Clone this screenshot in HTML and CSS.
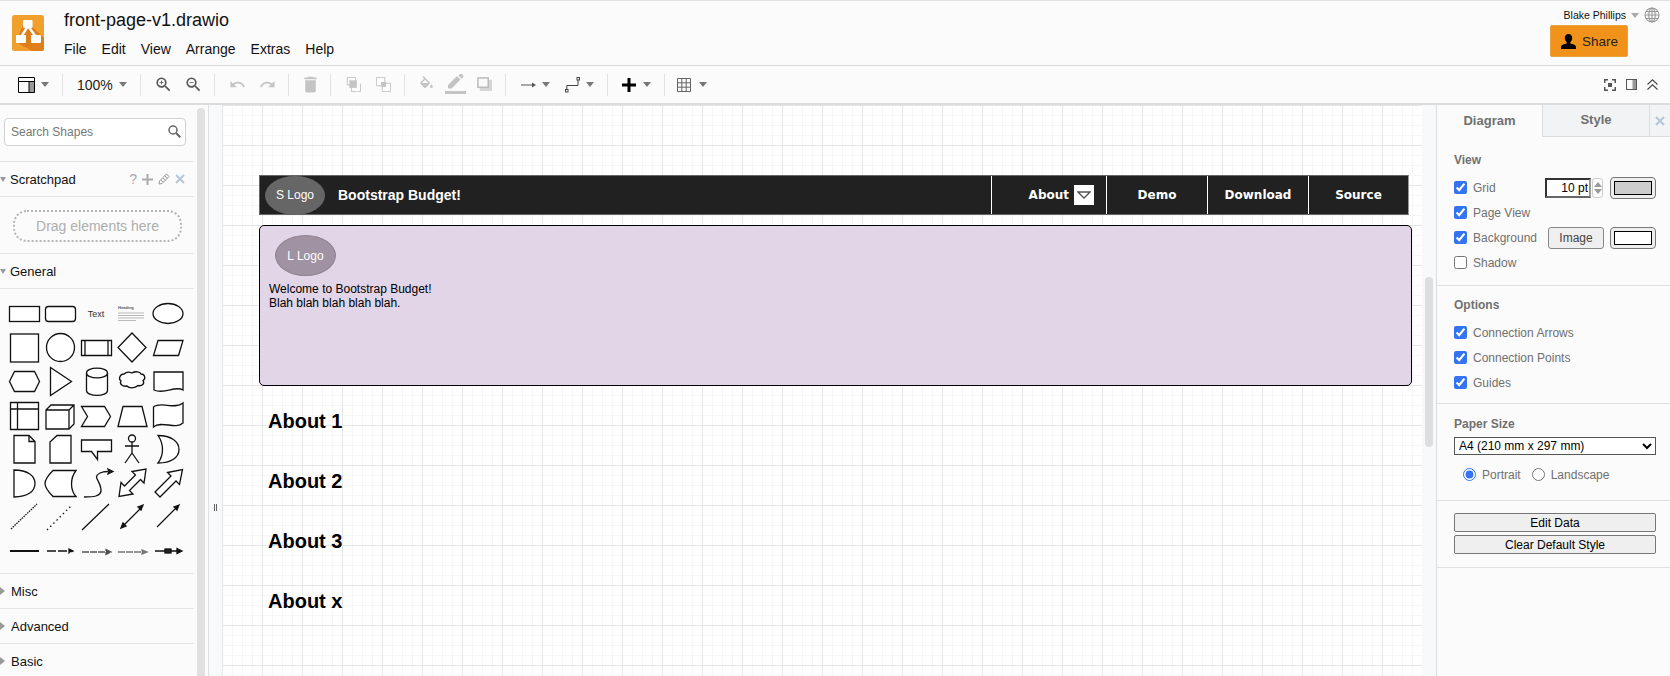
FILE: index.html
```html
<!doctype html>
<html lang="en">
<head>
    <meta charset="UTF-8">
    <title>front-page-v1.drawio</title>
    <link rel="stylesheet" href="styles.css">
</head>
<body>
<div class="app">
    <header class="header">
        <svg class="logo" viewBox="0 0 32 36" width="32" height="36">
            <rect width="32" height="36" rx="2.5" fill="#f2a02d"/>
            <path d="M13 5 L32 23 V33.5 A2.5 2.5 0 0 1 29.5 36 H20 L4 27 Z" fill="#df7f1c"/>
            <path d="M16 11 L9 22 M16 11 L24 22" stroke="#fff" stroke-width="2.4"/>
            <rect x="11" y="5" width="9.500" height="8" rx="1" fill="#fff"/>
            <rect x="4" y="20" width="10" height="8" rx="1" fill="#fff"/>
            <rect x="19" y="20" width="10" height="8" rx="1" fill="#fff"/>
        </svg>
        <div class="title-block">
            <div class="file-name">front-page-v1.drawio</div>
            <nav class="menu">
                <span>File</span><span>Edit</span><span>View</span><span>Arrange</span><span>Extras</span><span>Help</span>
            </nav>
        </div>
        <div class="user-block">
            <div class="user-row">
                <span>Blake Phillips</span>
                <i class="caret caret-light"></i>
                <svg width="16" height="16" viewBox="0 0 16 16" fill="none" stroke="#999" stroke-width="1.1">
                    <circle cx="8" cy="8" r="7"/>
                    <ellipse cx="8" cy="8" rx="3.2" ry="7"/>
                    <path d="M8 1v14M1 8h14M2 4.5h12M2 11.5h12"/>
                </svg>
            </div>
            <button class="share-btn">
                <svg width="17" height="17" viewBox="0 0 16 16"><path d="M8 1c2.200 0 3.500 1.700 3.500 3.800 0 1.700-.8 3.100-1.800 3.800v1.300c2.500.5 5.300 1.400 5.300 3.100V15H1v-2c0-1.700 2.800-2.600 5.300-3.100V8.600C5.300 7.900 4.500 6.500 4.500 4.800 4.500 2.700 5.800 1 8 1z"/></svg>
                Share
            </button>
        </div>
    </header>

    <div class="toolbar">
        <div class="tb-btn tb-layout">
            <svg width="17" height="16" viewBox="0 0 17 16"><rect x="11" y="4" width="5.500" height="11.500" fill="#999"/><path d="M.5.5h16v15H.5zM.5 4.500h16M11 4.500v11" fill="none" stroke="#000"/></svg>
            <i class="caret"></i>
        </div>
        <i class="tb-sep"></i>
        <div class="tb-btn tb-zoom"><span>100%</span><i class="caret"></i></div>
        <i class="tb-sep"></i>
        <div class="tb-btn"><svg class="ico dark" viewBox="0 0 24 24"><path d="M15.500 14h-.79l-.28-.27A6.470 6.470 0 0 0 16 9.500 6.500 6.500 0 1 0 9.500 16c1.610 0 3.090-.59 4.230-1.570l.27.28v.79l5 4.990L20.490 19l-4.990-5zm-6 0C7.010 14 5 11.990 5 9.500S7.010 5 9.500 5 14 7.010 14 9.500 11.990 14 9.500 14z"/><path d="M12 10h-2v2H9v-2H7V9h2V7h1v2h2z"/></svg></div>
        <div class="tb-btn"><svg class="ico dark" viewBox="0 0 24 24"><path d="M15.500 14h-.79l-.28-.27A6.470 6.470 0 0 0 16 9.500 6.500 6.500 0 1 0 9.500 16c1.610 0 3.090-.59 4.230-1.570l.27.28v.79l5 4.990L20.490 19l-4.990-5zm-6 0C7.010 14 5 11.990 5 9.500S7.010 5 9.500 5 14 7.010 14 9.500 11.990 14 9.500 14z"/><path d="M7 9h5v1H7z"/></svg></div>
        <i class="tb-sep"></i>
        <div class="tb-btn"><svg class="ico" viewBox="0 0 24 24"><path d="M12.500 8c-2.650 0-5.050.99-6.900 2.600L2 7v9h9l-3.620-3.620c1.390-1.160 3.160-1.880 5.120-1.880 3.540 0 6.550 2.310 7.600 5.500l2.370-.78C21.080 11.030 17.150 8 12.500 8z"/></svg></div>
        <div class="tb-btn"><svg class="ico" viewBox="0 0 24 24"><path d="M18.400 10.600C16.550 8.990 14.150 8 11.500 8c-4.650 0-8.580 3.030-9.960 7.220L3.900 16c1.050-3.190 4.050-5.500 7.600-5.500 1.950 0 3.730.72 5.120 1.880L13 16h9V7l-3.600 3.600z"/></svg></div>
        <i class="tb-sep"></i>
        <div class="tb-btn tb-narrow"><svg class="ico ico-trash" viewBox="0 0 24 24"><path d="M6 19c0 1.100.9 2 2 2h8c1.100 0 2-.9 2-2V7H6v12zM19 4h-3.500l-1-1h-5l-1 1H5v2h14V4z"/></svg></div>
        <i class="tb-sep"></i>
        <div class="tb-btn"><svg class="ico ico-order" viewBox="0 0 18 18"><path d="M1.500.5h10v4.500M1.500.5v9h5M12.500 17.500h-6v-5M17.500 8v9.500h-4" fill="none" stroke="#bbb"/><rect x="4" y="4" width="9" height="9" fill="#c4c4c4"/></svg></div>
        <div class="tb-btn"><svg class="ico ico-order" viewBox="0 0 18 18"><path d="M.5.5h10v10H.5zM7.500 7.500h10v10h-10z" fill="#fff" stroke="#bbb"/><rect x="6" y="6" width="6" height="6" fill="#c4c4c4"/></svg></div>
        <i class="tb-sep"></i>
        <div class="tb-btn tb-style"><svg class="ico" viewBox="0 0 24 24"><path d="M16.560 8.940L7.620 0 6.210 1.410l2.380 2.380-5.150 5.150c-.59.59-.59 1.540 0 2.120l5.500 5.500c.29.290.68.44 1.060.44s.77-.15 1.060-.44l5.500-5.500c.59-.58.59-1.530 0-2.120zM5.210 10L10 5.210 14.790 10H5.210zM19 11.500s-2 2.170-2 3.500c0 1.100.9 2 2 2s2-.9 2-2c0-1.330-2-3.500-2-3.500z"/></svg></div>
        <div class="tb-btn tb-style"><svg class="ico ico-line" viewBox="0 0 21 21"><path d="M15.500 5.500L12 2 3 11v3.500h3.500zM18.200 2.800c.4-.4.4-1 0-1.400L16.600-.2c-.4-.4-1-.4-1.400 0L13.500 1.500l3.500 3.500z"/><rect y="17" width="21" height="3"/></svg></div>
        <div class="tb-btn tb-style"><svg class="ico ico-order" viewBox="0 0 16 16"><rect x="3" y="3" width="13" height="12" fill="#d6d6d6"/><rect x="1" y="1" width="11" height="10" fill="#fafafa" stroke="#bbb" stroke-width="1.600"/></svg></div>
        <i class="tb-sep"></i>
        <div class="tb-btn tb-wide">
            <svg width="15" height="8" viewBox="0 0 15 8"><path d="M0 4h12" stroke="#555"/><path d="M11 1.500L15 4l-4 2.500z" fill="#555"/></svg>
            <i class="caret"></i>
        </div>
        <div class="tb-btn tb-wide">
            <svg width="15" height="16" viewBox="0 0 15 16" fill="none" stroke="#444"><rect x=".5" y="12.500" width="2.500" height="2.500"/><rect x="12" y=".5" width="2.500" height="2.500"/><path d="M1.800 12.500V8.500H13V3"/></svg>
            <i class="caret"></i>
        </div>
        <i class="tb-sep"></i>
        <div class="tb-btn tb-plus">
            <svg width="14" height="14" viewBox="0 0 14 14"><path d="M5.500 0h3v5.500H14v3H8.500V14h-3V8.500H0v-3h5.500z"/></svg>
            <i class="caret"></i>
        </div>
        <i class="tb-sep"></i>
        <div class="tb-btn tb-table">
            <svg width="14" height="14" viewBox="0 0 14 14" fill="none" stroke="#666"><path d="M.5.500h13v13H.5zM4.800.5v13M9.200.5v13M.5 4.800h13M.5 9.200h13"/></svg>
            <i class="caret"></i>
        </div>
        <div class="tb-right">
            <svg width="12" height="12" viewBox="0 0 12 12" fill="#555"><path d="M0 0h4v1.500H1.500V4H0zM8 0h4v4h-1.500V1.500H8zM0 8h1.500v2.500H4V12H0zM10.500 8H12v4H8v-1.500h2.500z"/><rect x="4" y="4" width="4" height="4"/></svg>
            <svg width="11" height="11" viewBox="0 0 11 11"><rect x="6.500" y="1" width="4" height="9" fill="#999"/><rect x=".5" y=".5" width="10" height="10" fill="none" stroke="#555"/></svg>
            <svg width="11" height="11" viewBox="0 0 11 11" fill="none" stroke="#444" stroke-width="1.100"><path d="M.5 5.500L5.500.8l5 4.700M.5 10.500l5-4.700 5 4.700"/></svg>
        </div>
    </div>

    <div class="workspace">
        <aside class="sidebar">
            <div class="shapes">
                <div class="search-wrap">
                    <input class="search" type="text" placeholder="Search Shapes">
                    <svg class="search-ico" width="13" height="13" viewBox="0 0 13 13" fill="none" stroke="#666" stroke-width="1.500"><circle cx="5" cy="5" r="4"/><path d="M8 8l4.300 4.300" stroke-width="2"/></svg>
                </div>
                <div class="sec-head">
                    <i class="tri-down"></i><span>Scratchpad</span>
                    <div class="sec-tools">
                        <span class="tool-q">?</span>
                        <svg width="11" height="11" viewBox="0 0 11 11"><path d="M4.500 0h2v4.500H11v2H6.500V11h-2V6.500H0v-2h4.500z" fill="#aaa"/></svg>
                        <svg width="12" height="12" viewBox="0 0 12 12" fill="none" stroke="#999"><path d="M1 11l.6-3L8.500 1l2.500 2.500-7 7zM3 7l2.500 2.500M5 5l2.500 2.500M7 3l2.500 2.500"/></svg>
                        <svg width="10" height="10" viewBox="0 0 10 10" stroke="#b4c6da" stroke-width="2"><path d="M1 1l8 8M9 1L1 9"/></svg>
                    </div>
                </div>
                <div class="scratch-body"><div class="drop-box">Drag elements here</div></div>
                <div class="sec-head"><i class="tri-down"></i><span>General</span></div>
                <div class="palette">
                    <svg width="194" height="285" viewBox="0 0 194 285" fill="#fff" stroke="#111" stroke-width="1.300">
                        <g transform="translate(0,-289)">
                            <rect x="9.500" y="306.500" width="30" height="15"/>
                            <rect x="45.500" y="306.500" width="30" height="15" rx="3"/>
                            <text x="96" y="317" class="pal-text">Text</text>
                            <text x="118" y="309" class="pal-head">Heading</text>
                            <path d="M118 313h26M118 315.500h26M118 318h26M118 320.500h18" stroke="#aaa" stroke-width=".8"/>
                            <ellipse cx="168" cy="313.500" rx="15" ry="10"/>

                            <rect x="10.500" y="334" width="28" height="28"/>
                            <circle cx="60.500" cy="347.500" r="14"/>
                            <path d="M81.500 340.500h30v15h-30zM85 340.500v15M108 340.500v15"/>
                            <path d="M132 333l14 14.500-14 14.500-14-14.500z"/>
                            <path d="M158 340.500h25l-4.500 15h-25z"/>

                            <path d="M14.500 371.500h20l5 10-5 10h-20l-5-10z"/>
                            <path d="M50.500 367.500l21 14-21 14z"/>
                            <path d="M86.500 373c0-6.500 21-6.500 21 0v17.500c0 6.500-21 6.500-21 0zM86.500 373c0 6.500 21 6.500 21 0"/>
                            <path d="M124 374c3-3 6-2 8-1 3-2 8-1.500 9 1 4 0 5 5 2 6.500 2 3-1 6-5 5-3 3-9 3-11 .5-4 1-8-2-6-5-3-2-1-7 3-7z"/>
                            <path d="M154 372h29v18c-8-5-18 5-29 0z"/>

                            <path d="M10.500 402.500h28v27h-28zM10.500 409h28M17.500 402.500v27"/>
                            <path d="M46 410l5-5h23v19l-5 5H46zM46 410h23v19M69 410l5-5" />
                            <path d="M81.500 406.500h23l6 10-6 10h-23l6-10z"/>
                            <path d="M123 406.500h19l5 20h-29z"/>
                            <path d="M153.500 407c8-6 21 3 29.500-4v20c-8 7-21-3-29.500 4z"/>

                            <path d="M14 435.500h15l6 6v21.500H14zM29 435.500v6h6"/>
                            <path d="M57 435.500h14v27.500H50v-21z"/>
                            <path d="M81.500 440h30v11.500h-14v8l-6-8h-10z"/>
                            <circle cx="132" cy="438.500" r="3.500"/>
                            <path d="M132 442v11M125 446h14M132 453l-7 10M132 453l7 10" fill="none"/>
                            <path d="M158 435.500c13 0 21 6 21 14s-8 13.500-21 13.500c6-8 6-19 0-27.500z"/>

                            <path d="M14 470c14 0 21 6 21 13.500S28 497 14 497z"/>
                            <path d="M53 470.500h23c-6 8-6 19 0 26H53c-5-5-8-9-8-13s3-8 8-13z"/>
                            <path d="M84 497c8 0 18 0 17-8-1-9-9-12-1-16 3-1.500 6-1.500 8-1.500" fill="none"/>
                            <path d="M108 469l1 2.500-1 2.500 5-2.500z" fill="#222"/>
                            <path d="M119 496.500l2-14 3.500 3.500 11-11-3.500-3.500 14-2.500-2 14-3.500-3.500-11 11 3.500 3.500z"/>
                            <path d="M155 492l16-16-3.500-3.500 15-3-3 15-3.500-3.500-16 16z"/>

                            <path d="M11 529l26-25" stroke-dasharray="1.500 1" fill="none"/>
                            <path d="M47 530l25-25" stroke-dasharray="1.500 3" fill="none"/>
                            <path d="M82 530l27-26" fill="none"/>
                            <path d="M122 527l21-21M121 528l2-5 3 3zM143 505l-5 2 3 3z" fill="#222"/>
                            <path d="M157 527l21-21M179 505l-5 2 3 3z" fill="#222"/>

                            <path d="M10 551h29" stroke-width="2"/>
                            <path d="M47 551h26M73 551l-4-2v4z" stroke-dasharray="9 2" fill="#222"/>
                            <path d="M82 552h28M111 552l-5-2.500v5z" stroke-dasharray="7 1" stroke="#555" fill="#222"/>
                            <path d="M118 552h28M147 552l-5-2v4z" stroke-dasharray="7 1" stroke="#777" fill="#777"/>
                            <path d="M155 551h26M182 551l-5-2.500v5z" fill="#222"/>
                            <rect x="165" y="549" width="6" height="4" fill="#222"/>
                        </g>
                    </svg>
                </div>
                <div class="sec-head"><i class="tri-right"></i><span>Misc</span></div>
                <div class="sec-head"><i class="tri-right"></i><span>Advanced</span></div>
                <div class="sec-head"><i class="tri-right"></i><span>Basic</span></div>
            </div>
            <div class="side-thumb"></div>
        </aside>

        <main class="canvas">
            <div class="gutter-left"><i class="grip"></i></div>
            <div class="page">
                <div class="node navbar">
                    <div class="s-logo">S Logo</div>
                    <div class="brand">Bootstrap Budget!</div>
                    <div class="nav-item nav-about">
                        <span>About</span>
                        <span class="nav-drop"><svg width="14" height="8" viewBox="0 0 14 8"><path d="M1 1h12L7 7z" fill="#fff" stroke="#555" stroke-width="1.300"/></svg></span>
                    </div>
                    <div class="nav-item nav-std">Demo</div>
                    <div class="nav-item nav-std">Download</div>
                    <div class="nav-item nav-std nav-last">Source</div>
                </div>
                <div class="node hero">
                    <div class="l-logo">L Logo</div>
                    <p class="hero-text">Welcome to Bootstrap Budget!<br>Blah blah blah blah blah.</p>
                </div>
                <h2 class="node about about-1">About 1</h2>
                <h2 class="node about about-2">About 2</h2>
                <h2 class="node about about-3">About 3</h2>
                <h2 class="node about about-x">About x</h2>
            </div>
            <div class="gutter-right"><div class="canvas-thumb"></div></div>
        </main>

        <aside class="format">
            <div class="tabs">
                <div class="tab tab-active">Diagram</div>
                <div class="tab">Style</div>
                <div class="tab-close">
                    <svg width="10" height="10" viewBox="0 0 10 10" stroke="#b4c6da" stroke-width="2"><path d="M1 1l8 8M9 1L1 9"/></svg>
                </div>
            </div>
            <section class="panel panel-view">
                <h3 class="panel-title">View</h3>
                <label class="row"><input type="checkbox" checked>Grid
                    <span class="row-end">
                        <input class="pt-input" type="text" value="10 pt">
                        <span class="spin"><i class="spin-up"></i><i class="spin-down"></i></span>
                        <span class="swatch-btn"><i class="swatch swatch-grey"></i></span>
                    </span>
                </label>
                <label class="row"><input type="checkbox" checked>Page View</label>
                <label class="row"><input type="checkbox" checked>Background
                    <span class="row-end">
                        <button class="image-btn">Image</button>
                        <span class="swatch-btn"><i class="swatch"></i></span>
                    </span>
                </label>
                <label class="row"><input type="checkbox">Shadow</label>
            </section>
            <section class="panel panel-options">
                <h3 class="panel-title">Options</h3>
                <label class="row"><input type="checkbox" checked>Connection Arrows</label>
                <label class="row"><input type="checkbox" checked>Connection Points</label>
                <label class="row"><input type="checkbox" checked>Guides</label>
            </section>
            <section class="panel panel-paper">
                <h3 class="panel-title">Paper Size</h3>
                <select class="paper-select"><option>A4 (210 mm x 297 mm)</option></select>
                <div class="radios">
                    <label><input type="radio" name="orient" checked>Portrait</label>
                    <label><input type="radio" name="orient">Landscape</label>
                </div>
            </section>
            <section class="panel panel-actions">
                <button class="wide-btn">Edit Data</button>
                <button class="wide-btn">Clear Default Style</button>
            </section>
        </aside>
    </div>
</div>
</body>
</html>
```

FILE: styles.css
```css
* {
    box-sizing: border-box;
}

html, body {
    margin: 0;
    height: 100%;
    overflow: hidden;
}

body {
    font-family: "Liberation Sans", Arial, sans-serif;
    font-size: 12px;
    color: #111;
    background: #fbfbfb;
}

.app {
    display: flex;
    flex-direction: column;
    height: 676px;
}

/* header */
.header {
    display: flex;
    height: 66px;
    border-top: 1px solid #e0e0e0;
    border-bottom: 1px solid #dadada;
    padding-left: 12px;
    flex: none;
}

.logo {
    margin-top: 14px;
}

.title-block {
    margin-left: 20px;
}

.file-name {
    font-size: 18px;
    line-height: 22px;
    margin-top: 8px;
}

.menu {
    display: flex;
    gap: 15px;
    font-size: 14px;
    line-height: 18px;
    margin-top: 9px;
}

.user-block {
    margin-left: auto;
    display: flex;
    flex-direction: column;
    align-items: flex-end;
    padding-right: 10px;
}

.user-row {
    display: flex;
    align-items: center;
    gap: 5px;
    font-size: 10.500px;
    height: 16px;
    margin-top: 6px;
}

.share-btn {
    display: flex;
    align-items: center;
    justify-content: center;
    gap: 5px;
    width: 78px;
    height: 32px;
    margin: 2px 32px 0 0;
    padding: 0;
    font: 13.500px "Liberation Sans", Arial, sans-serif;
    color: #222;
    background: #f1931a;
    border: 1px solid #e8a33c;
    border-radius: 2px;
}

.caret {
    display: inline-block;
    border-top: 5px solid #777;
    border-left: 4px solid transparent;
    border-right: 4px solid transparent;
}

.caret-light {
    border-top-color: #aaa;
}

/* toolbar */
.toolbar {
    display: flex;
    align-items: center;
    height: 39px;
    padding-left: 12px;
    border-bottom: 2px solid #dcdcdc;
    flex: none;
}

.tb-btn {
    display: flex;
    align-items: center;
    justify-content: center;
    width: 30px;
    height: 30px;
}

.tb-sep {
    width: 1px;
    height: 22px;
    background: #e2e2e2;
    margin: 0 7px 0 6px;
}

.tb-layout {
    width: 44px;
    gap: 6px;
    justify-content: flex-start;
    padding-left: 6px;
}

.tb-zoom {
    width: 64px;
    gap: 6px;
    font-size: 14px;
    justify-content: flex-start;
    padding-left: 7px;
    color: #222;
}

.tb-narrow {
    width: 28px;
}

.tb-style {
    width: 29px;
}

.tb-wide {
    width: 44px;
    gap: 6px;
    justify-content: flex-start;
    padding-left: 8px;
}

.tb-plus {
    width: 43px;
    gap: 7px;
    justify-content: flex-start;
    padding-left: 7px;
}

.tb-table {
    width: 44px;
    gap: 8px;
    justify-content: flex-start;
    padding-left: 5px;
}

.tb-right {
    margin-left: auto;
    display: flex;
    align-items: center;
    gap: 10px;
    padding-right: 12px;
}

.ico {
    width: 17px;
    height: 17px;
    fill: #c4c4c4;
}

.ico.dark {
    width: 19px;
    height: 19px;
    fill: #555;
}

.ico-line {
    width: 21px;
    height: 21px;
}

.ico-trash {
    width: 21px;
    height: 21px;
}

.ico-order {
    width: 15px;
    height: 15px;
}

/* main area */
.workspace {
    display: flex;
    flex: 1;
    min-height: 0;
}

.sidebar {
    display: flex;
    width: 209px;
    border-right: 1px solid #e2e2e2;
    flex: none;
}

.shapes {
    width: 194px;
    flex: none;
}

.side-thumb {
    width: 8px;
    margin: 3px 3px 0;
    background: #e0e0e0;
    border-radius: 4px 4px 0 0;
}

.search-wrap {
    position: relative;
    padding: 13px 0 0 4px;
    height: 56px;
}

.search {
    width: 182px;
    height: 28px;
    padding: 0 6px;
    border: 1px solid #d0d0d0;
    border-radius: 4px;
    font: 12px "Liberation Sans", Arial, sans-serif;
    outline: none;
}

.search::placeholder {
    color: #777;
}

.search-ico {
    position: absolute;
    top: 20px;
    left: 168px;
}

.sec-head {
    display: flex;
    align-items: center;
    height: 35px;
    font-size: 13px;
    border-top: 1px solid #e4e4e4;
}

.sec-head span:first-of-type {
    margin-left: 4px;
}

.sec-tools {
    margin-left: auto;
    display: flex;
    align-items: center;
    gap: 5px;
    padding-right: 9px;
}

.tool-q {
    color: #aaa;
    font-size: 14px;
}

.tri-down {
    border-top: 5px solid #999;
    border-left: 3.500px solid transparent;
    border-right: 3.500px solid transparent;
}

.tri-right {
    border-left: 5px solid #999;
    border-top: 4px solid transparent;
    border-bottom: 4px solid transparent;
    margin-right: 2px;
}

.scratch-body {
    height: 57px;
    border-top: 1px solid #e4e4e4;
    padding: 13px 0 0 13px;
}

.drop-box {
    display: flex;
    align-items: center;
    justify-content: center;
    width: 169px;
    height: 32px;
    border: 2px dotted #b5b5b5;
    border-radius: 14px;
    font-size: 14px;
    color: #aeaeae;
}

.palette {
    height: 285px;
    border-top: 1px solid #e4e4e4;
}

.palette svg {
    display: block;
}

.pal-text {
    font-size: 9px;
    text-anchor: middle;
    stroke: none;
    fill: #333;
}

.pal-head {
    font-size: 4px;
    font-weight: bold;
    stroke: none;
    fill: #555;
}

/* canvas */
.canvas {
    display: flex;
    flex: 1;
    min-width: 0;
}

.gutter-left {
    display: flex;
    align-items: flex-start;
    justify-content: center;
    width: 13px;
    padding-top: 399px;
    background: #f8f9fa;
    flex: none;
}

.grip {
    width: 3px;
    height: 7px;
    border-left: 1px solid #666;
    border-right: 1px solid #666;
}

.page {
    position: relative;
    flex: 1;
    background-color: #fff;
    background-image:
        linear-gradient(to right, #e6e6e6 1px, transparent 1px),
        linear-gradient(to bottom, #e6e6e6 1px, transparent 1px),
        linear-gradient(to right, #f6f6f6 1px, transparent 1px),
        linear-gradient(to bottom, #f6f6f6 1px, transparent 1px);
    background-size: 40px 40px, 40px 40px, 10px 10px, 10px 10px;
    overflow: hidden;
}

.gutter-right {
    width: 14px;
    background: #f8f9fa;
    flex: none;
    padding: 172px 3px 0;
}

.canvas-thumb {
    width: 8px;
    height: 170px;
    background: #dddee0;
    border-radius: 4px;
}

.node {
    position: absolute;
}

.navbar {
    display: flex;
    align-items: center;
    left: 37px;
    top: 70px;
    width: 1150px;
    height: 40px;
    background: #212121;
    border: 1px solid #666;
    border-right-color: #999;
    color: #fff;
}

.s-logo {
    display: flex;
    align-items: center;
    justify-content: center;
    width: 60px;
    height: 39px;
    margin-left: 5px;
    border-radius: 50%;
    background: #666;
    font-size: 12px;
}

.brand {
    font-size: 14px;
    font-weight: bold;
    margin-left: 13px;
    margin-right: auto;
}

.nav-item {
    display: flex;
    align-items: center;
    height: 100%;
    border-left: 1px solid #fff;
    font-family: "DejaVu Sans", sans-serif;
    font-size: 12px;
    font-weight: bold;
}

.nav-about {
    width: 115px;
    justify-content: flex-end;
    gap: 5px;
    padding-right: 12px;
}

.nav-std {
    width: 101px;
    justify-content: center;
}

.nav-last {
    width: 100px;
}

.nav-drop {
    display: flex;
    align-items: center;
    justify-content: center;
    width: 20px;
    height: 20px;
    background: #fff;
}

.hero {
    left: 37px;
    top: 120px;
    width: 1153px;
    height: 161px;
    background: #e1d5e7;
    border: 1px solid #000;
    border-radius: 5px;
}

.l-logo {
    display: flex;
    align-items: center;
    justify-content: center;
    width: 61px;
    height: 41px;
    margin: 9px 0 0 15px;
    border-radius: 50%;
    border: 1px solid #8f8290;
    background: #a092a2;
    color: #fff;
    font-size: 12px;
}

.hero-text {
    margin: 6px 0 0 9px;
    font-size: 12px;
    line-height: 14px;
    color: #000;
}

.about {
    left: 46px;
    margin: 0;
    font-size: 20px;
    line-height: 24px;
    color: #000;
}

.about-1 { top: 304px; }
.about-2 { top: 364px; }
.about-3 { top: 424px; }
.about-x { top: 484px; }

/* format panel */
.format {
    width: 234px;
    flex: none;
    border-left: 1px solid #dcdcdc;
    color: #707070;
    accent-color: #3574f0;
}

.tabs {
    display: flex;
    height: 32px;
}

.tab {
    display: flex;
    align-items: center;
    justify-content: center;
    width: 107px;
    padding-bottom: 2px;
    font-size: 13px;
    font-weight: bold;
    background: #f1f3f4;
    border-left: 1px solid #dcdcdc;
    border-bottom: 1px solid #dcdcdc;
}

.tab-active {
    width: 105px;
    background: #fbfbfb;
    border-left: 0;
    border-bottom: 0;
}

.tab-close {
    display: flex;
    align-items: center;
    justify-content: center;
    flex: 1;
    background: #f1f3f4;
    border-left: 1px solid #dcdcdc;
    border-bottom: 1px solid #dcdcdc;
}

.panel {
    padding-left: 17px;
    padding-right: 14px;
    border-bottom: 1px solid #e0e0e0;
}

.panel-title {
    margin: 0;
    font-size: 12px;
    line-height: 16px;
}

.panel-view {
    padding-top: 15px;
    padding-bottom: 10px;
}

.panel-view .panel-title {
    margin-bottom: 7px;
}

.panel-options {
    padding-top: 11px;
    padding-bottom: 8px;
}

.panel-options .panel-title {
    margin-bottom: 7px;
}

.panel-paper {
    padding-top: 12px;
    padding-bottom: 13px;
}

.panel-actions {
    display: flex;
    flex-direction: column;
    gap: 3px;
    padding-top: 12px;
    padding-bottom: 13px;
}

.row {
    display: flex;
    align-items: center;
    height: 25px;
    gap: 6px;
}

.row input[type="checkbox"] {
    width: 13px;
    height: 13px;
    margin: 0;
}

.row-end {
    display: flex;
    align-items: center;
    margin-left: auto;
}

.pt-input {
    width: 46px;
    height: 20px;
    padding: 0 1px 0 0;
    border: 2px solid #333;
    border-right-color: #999;
    border-bottom-color: #666;
    font: 12px "Liberation Sans", Arial, sans-serif;
    color: #000;
    text-align: right;
}

.spin {
    display: flex;
    flex-direction: column;
    align-items: center;
    justify-content: center;
    gap: 2px;
    width: 11px;
    height: 20px;
    margin: 0 7px 0 1px;
    border: 1px solid #ccc;
    border-radius: 3px;
}

.spin-up {
    border-bottom: 5px solid #999;
    border-left: 4px solid transparent;
    border-right: 4px solid transparent;
}

.spin-down {
    border-top: 5px solid #999;
    border-left: 4px solid transparent;
    border-right: 4px solid transparent;
}

.swatch-btn {
    display: flex;
    align-items: center;
    justify-content: center;
    width: 46px;
    height: 22px;
    background: #eee;
    border: 1px solid #777;
    border-radius: 4px;
}

.swatch {
    width: 38px;
    height: 14px;
    background: #fff;
    border: 1px solid #000;
}

.swatch-grey {
    background: #cdcdcd;
}

.image-btn {
    width: 56px;
    height: 22px;
    margin-right: 6px;
    padding: 0;
    font: 12px "Liberation Sans", Arial, sans-serif;
    color: #444;
    background: #efefef;
    border: 1px solid #888;
    border-radius: 3px;
}

.paper-select {
    display: block;
    width: 202px;
    height: 18px;
    margin-top: 5px;
    padding: 0;
    font: 12px "Liberation Sans", Arial, sans-serif;
    color: #000;
    background: #fff;
    border: 1px solid #555;
    border-radius: 0;
}

.radios {
    display: flex;
    align-items: center;
    height: 25px;
    margin-top: 7px;
    padding-left: 9px;
    gap: 11px;
}

.radios label {
    display: flex;
    align-items: center;
    gap: 6px;
}

.radios input {
    width: 13px;
    height: 13px;
    margin: 0;
}

.wide-btn {
    width: 202px;
    height: 19px;
    padding: 0;
    font: 12px "Liberation Sans", Arial, sans-serif;
    color: #000;
    background: #efefef;
    border: 1px solid #777;
    border-radius: 2px;
}
```
